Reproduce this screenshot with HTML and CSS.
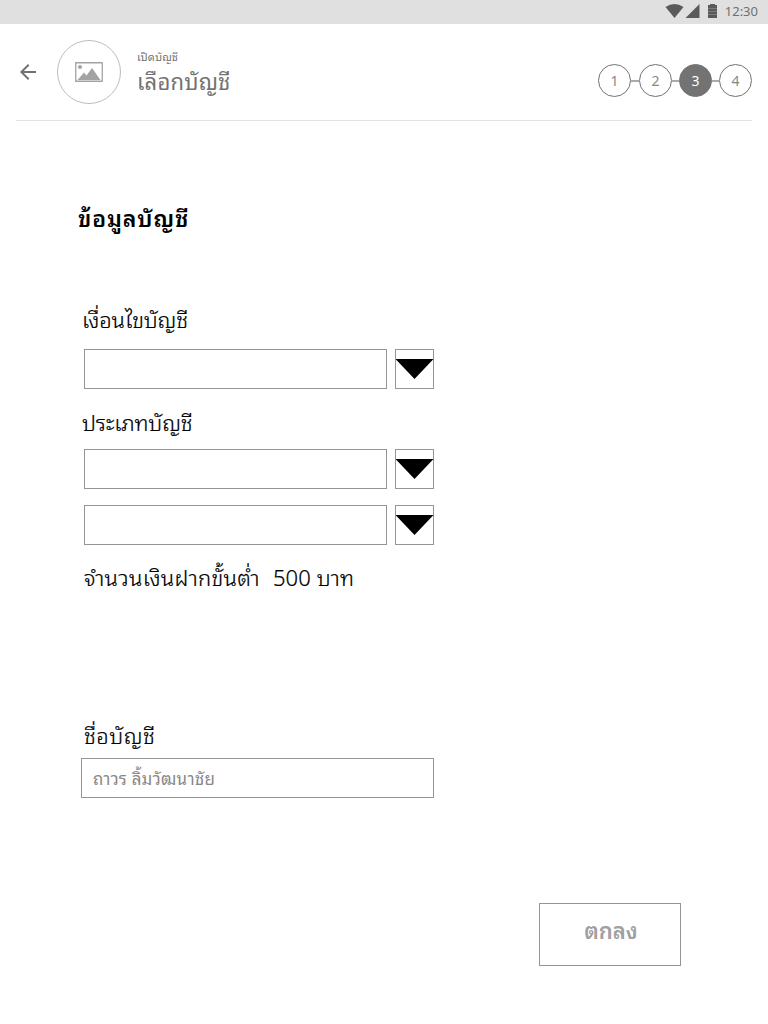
FILE: index.html
```
<!DOCTYPE html>
<html lang="th">
<head>
<meta charset="utf-8">
<title>เปิดบัญชี</title>
<link rel="stylesheet" href="styles.css">
</head>
<body>
<div class="statusbar">
  <svg class="status-icons" width="54" height="24" viewBox="0 0 54 24" fill="#5a5a5a">
    <path d="M.5 7Q9.500 1 18.500 7L9.500 18Z"/>
    <path d="M20.500 18H34.500V4Z"/>
    <path d="M43 5H45V4H50V5H52V18H43Z"/>
    <path d="M43 8.500H52M43 11.500H52M43 14.500H52" stroke="#8a8a8a" stroke-width=".7"/>
  </svg>
  <span class="clock">12:30</span>
</div>
<header class="header">
  <svg class="back" width="16" height="16" viewBox="0 0 16 16" fill="none" stroke="#737373" stroke-width="2"><path d="M16 8H1.500M8.700 .7L1.400 8L8.700 15.300"/></svg>
  <div class="avatar">
    <svg width="28" height="20" viewBox="0 0 28 20"><path d="M.75 .75H27.250V19.250H.75Z" fill="none" stroke="#a3a3a3" stroke-width="1.300"/><circle cx="5" cy="5" r="2" fill="#a3a3a3"/><path d="M2.500 18L9 10.500L11.500 13.500L17 6L25.500 18Z" fill="#a3a3a3"/></svg>
  </div>
  <div class="titles">
    <div class="subtitle">เปิดบัญชี</div>
    <h1 class="title">เลือกบัญชี</h1>
  </div>
  <ol class="steps">
    <li class="step">1</li>
    <li class="step">2</li>
    <li class="step active">3</li>
    <li class="step">4</li>
  </ol>
</header>
<main class="form">
  <h2 class="heading">ข้อมูลบัญชี</h2>
  <label class="label terms">เงื่อนไขบัญชี</label>
  <div class="select"><div class="field"></div><div class="arrow"></div></div>
  <label class="label kind">ประเภทบัญชี</label>
  <div class="select"><div class="field"></div><div class="arrow"></div></div>
  <div class="select second"><div class="field"></div><div class="arrow"></div></div>
  <p class="label deposit"><span>จำนวนเงินฝากขั้นต่ำ</span><span class="amount">500 บาท</span></p>
  <label class="label name">ชื่อบัญชี</label>
  <div class="name-field">ถาวร ลิ้มวัฒนาชัย</div>
  <button class="submit">ตกลง</button>
</main>
</body>
</html>
```
FILE: styles.css
```
* { box-sizing: border-box; margin: 0; padding: 0; }
body { width: 768px; height: 1024px; overflow: hidden; background: #fff; color: #000; font-family: "Noto Sans Thai Looped", "Noto Sans", "Loma", sans-serif; white-space: nowrap; }
.statusbar { height: 24px; background: #e0e0e0; display: flex; justify-content: flex-end; padding-right: 10px; }
.status-icons { margin-right: 6px; }
.clock { font: 400 13px/23px "Noto Sans", sans-serif; color: #707070; }
.header { height: 97px; margin: 0 16px; border-bottom: 1px solid #e2e2e2; display: flex; align-items: center; padding-left: 4px; }
.avatar { width: 64px; height: 64px; margin-left: 21px; border: 1px solid #bdbdbd; border-radius: 50%; display: flex; align-items: center; justify-content: center; }
.titles { margin-left: 16px; color: #737373; }
.subtitle { font-size: 11px; line-height: 16px; letter-spacing: .1px; }
.title { font-size: 22px; line-height: 32px; font-weight: 400; letter-spacing: .2px; }
.steps { list-style: none; display: flex; align-items: center; margin-left: auto; padding-top: 17px; }
.step { display: flex; align-items: center; font: 400 14px/31px "Noto Sans", sans-serif; width: 33px; height: 33px; justify-content: center; border: 1px solid #737373; border-radius: 50%; color: #888; }
.step + .step { margin-left: 7px; position: relative; }
.step:nth-child(2) { margin-left: 8px; }
.step + .step::before { content: ""; position: absolute; right: 32px; top: 15px; width: 7px; height: 2px; background: #aaa; }
.step:nth-child(2)::before { width: 8px; }
.step.active { background: #737373; color: #fff; }
.form { display: flex; flex-direction: column; align-items: flex-start; padding-left: 84px; }
.heading { font-size: 23px; line-height: 36px; height: 36px; margin: 78px 0 0 -6px; font-weight: 600; letter-spacing: .9px; }
.label { font-size: 22px; line-height: 36px; font-weight: 300; -webkit-text-stroke: .2px #000; }
.terms { margin: 65px 0 0 -2px; height: 49px; letter-spacing: -.15px; }
.kind { margin: 14px 0 0 -2px; height: 46px; letter-spacing: -.15px; }
.select { display: flex; gap: 8px; }
.field { width: 303px; height: 40px; border: 1px solid #939598; }
.arrow { width: 39px; height: 40px; border: 1px solid #939598; padding-top: 9px; }
.arrow::before { content: ""; display: block; width: 38px; height: 20px; margin-left: -.5px; background: #000; clip-path: polygon(0 0, 100% 0, 50% 100%); }
.second { margin-top: 16px; }
.deposit { margin-top: 13px; display: flex; gap: 13px; letter-spacing: .35px; }
.amount { letter-spacing: .1px; }
.name { margin-top: 122px; height: 42px; letter-spacing: .5px; }
.name-field { width: 353px; height: 40px; margin-left: -3px; border: 1px solid #939598; padding-left: 11px; font-size: 17px; line-height: 38px; letter-spacing: .2px; color: #888; }
.submit { width: 142px; height: 63px; margin: 105px 0 0 455px; border: 1px solid #939598; background: #fff; font-family: inherit; font-size: 22px; font-weight: 600; line-height: 40px; padding: 0 0 11px 2px; color: #a0a0a0; }
```
